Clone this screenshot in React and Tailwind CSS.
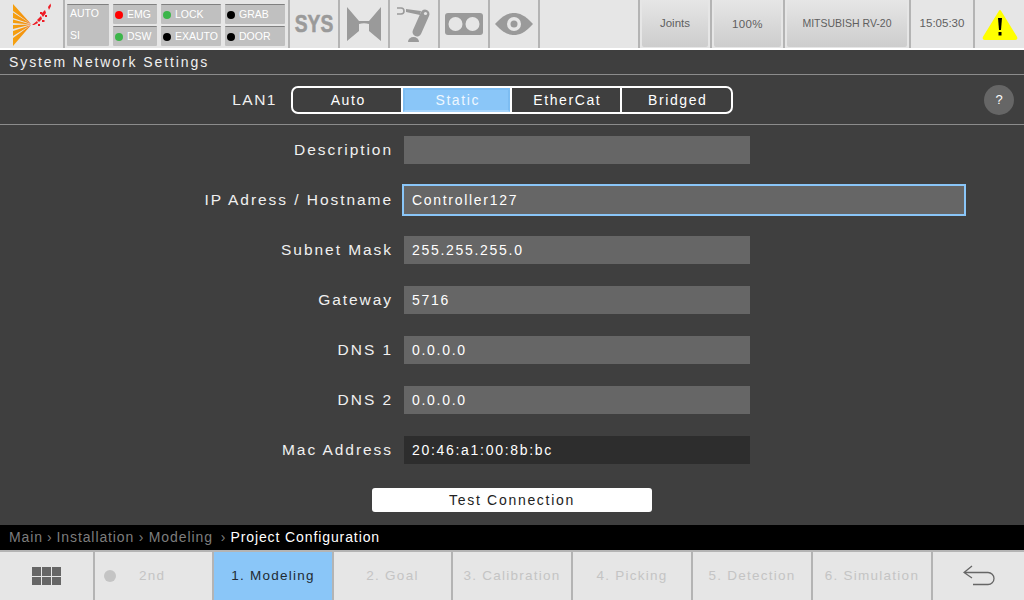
// App.jsx
// System Network Settings screen, 1024x600 panel

const labelFont = "font-['Liberation_Sans',sans-serif]";

// ── top bar status lamp ──
function Lamp({ color, label, w }) {
  return (
    <div className={`${w} h-[20px] bg-[#c0c0c0] border-t border-[#808080] rounded-[1px] flex items-center pl-[2px] text-[10.5px] text-white`}>
      <span className="w-[8px] h-[8px] rounded-full mr-[4px] shrink-0" style={{ background: color }} />
      {label}
    </div>
  );
}

function IconCell({ children }) {
  return (
    <div className="w-[50px] h-full border-r-2 border-[#b4b4b4] flex items-center justify-center shrink-0">
      {children}
    </div>
  );
}

function TopButton({ w, children }) {
  return (
    <div className={`${w} h-full shrink-0 border-r-2 border-[#b4b4b4] px-[2px] pb-[1px]`}>
      <div className="h-full rounded-b-[2px] bg-gradient-to-b from-[#e6e6e6] to-[#cdcdcd] flex items-center justify-center text-[#5f5f5f]">
        {children}
      </div>
    </div>
  );
}

function Logo() {
  return (
    <svg width="63" height="49" viewBox="0 0 63 49">
      <defs>
        <linearGradient id="fan" x1="13" y1="0" x2="31" y2="0" gradientUnits="userSpaceOnUse">
          <stop offset="0" stopColor="#f5a10f" />
          <stop offset="0.75" stopColor="#f4900f" />
          <stop offset="1" stopColor="#ef5a2a" />
        </linearGradient>
      </defs>
      <g fill="url(#fan)">
        <polygon points="13,4 13,11 31,24" />
        <polygon points="13,12.5 13,18 31,24" />
        <polygon points="13,19.5 13,23 31,24.5" />
        <polygon points="13,25 13,29 31,24.5" />
        <polygon points="13,31 13,36 31,25" />
        <polygon points="13,38 13,46 31,25" />
      </g>
      <g fill="#ee1c25">
        <polygon points="32,25 37,21 38,23 34,25" />
        <polygon points="37,20 41,16 42,19 39,22" />
        <polygon points="41,14 45,10 46,13 43,17" />
        <rect x="38" y="24" width="2" height="2" />
        <rect x="42" y="20" width="2.5" height="2" />
        <rect x="45" y="15" width="2" height="2" />
        <rect x="40" y="12" width="2" height="2" />
        <polygon points="48,7 50.5,3.5 51,6 49,10" />
      </g>
    </svg>
  );
}

function Field({ label, value, wide, dark }) {
  return (
    <div className="h-[50px] flex items-center shrink-0">
      <div className="w-[393px] text-right text-[15.5px] tracking-[1.95px] text-[#f0f0f0]">{label}</div>
      {wide ? (
        <div className="ml-[9px] w-[564px] h-[32px] bg-[#666666] border-2 border-[#8ac6f8] pl-[8px] pt-[1px] flex items-center text-[14px] tracking-[1.7px] text-white">
          {value}
        </div>
      ) : (
        <div className={`ml-[11px] w-[346px] h-[28px] ${dark ? 'bg-[#2d2d2d]' : 'bg-[#666666]'} pl-[8px] pt-[1px] flex items-center text-[14px] tracking-[1.7px] text-white`}>
          {value}
        </div>
      )}
    </div>
  );
}

function Segment({ label, active, last }) {
  return (
    <div className={`w-[110px] h-full ${last ? '' : 'border-r-2 border-white'}`}>
      <div className={`h-full pt-[1px] pl-[3px] flex items-center justify-center text-[14px] tracking-[1.6px] ${active ? 'bg-[#8ac6f8] border-2 border-[#7dbdf2] border-b-[#a4d3fa] text-[#eef7ff]' : 'text-white'}`}>
        {label}
      </div>
    </div>
  );
}

function Step({ label, active, w }) {
  return (
    <div className={`${w} h-full shrink-0 flex items-center justify-center border-r-2 border-[#b4b4b4] text-[13.5px] tracking-[1.25px] ${active ? 'bg-[#8ac6f8] text-[#222a33]' : 'text-[#c4c4c4]'}`}>
      {label}
    </div>
  );
}

export default function App() {
  return (
    <div className={`w-[1024px] h-[600px] flex flex-col overflow-hidden bg-[#3f3f3f] ${labelFont}`}>
      {/* top bar */}
      <div className="h-[50px] shrink-0 bg-[#e6e6e6] border-b-2 border-b-white flex">
        <div className="w-[65px] h-full shrink-0 border-r-2 border-[#b4b4b4] overflow-hidden">
          <Logo />
        </div>
        <div className="w-[225px] h-full shrink-0 border-r-2 border-[#b4b4b4] pl-[2px] pt-[4px] flex gap-[4px]">
          <div className="w-[42px] h-[42px] bg-[#c0c0c0] border-t border-[#808080] rounded-[1px] flex flex-col justify-between pl-[3px] pt-[1px] pb-[2px] text-[10.5px] text-white">
            <span>AUTO</span>
            <span>SI</span>
          </div>
          <div className="flex flex-col gap-[2px]">
            <Lamp w="w-[44px]" color="#ff0000" label="EMG" />
            <Lamp w="w-[44px]" color="#3cb54a" label="DSW" />
          </div>
          <div className="flex flex-col gap-[2px]">
            <Lamp w="w-[60px]" color="#3cb54a" label="LOCK" />
            <Lamp w="w-[60px]" color="#000000" label="EXAUTO" />
          </div>
          <div className="flex flex-col gap-[2px]">
            <Lamp w="w-[60px]" color="#000000" label="GRAB" />
            <Lamp w="w-[60px]" color="#000000" label="DOOR" />
          </div>
        </div>
        <IconCell>
          <span className="text-[24px] font-bold text-[#9a9a9a] scale-x-[0.8] [-webkit-text-stroke:0.6px_#9a9a9a]">SYS</span>
        </IconCell>
        <IconCell>
          <svg width="34" height="34" viewBox="0 0 34 34">
            <path d="M0 0 L12 14 H22 L34 0 V34 L22 24 V17 Q17 15.5 12 17 V24 L0 34 Z" fill="#9a9a9a" />
          </svg>
        </IconCell>
        <IconCell>
          <svg width="36" height="36" viewBox="0 0 36 36">
            <path d="M1 2 H5 a3 3 0 0 1 0 6 H1" fill="none" stroke="#9a9a9a" strokeWidth="1.6" />
            <path d="M10 3 L25 5 L24 9 L10 6 Z" fill="#9a9a9a" />
            <path d="M29 8 L21 26" fill="none" stroke="#9a9a9a" strokeWidth="9" strokeLinecap="round" />
            <circle cx="29.5" cy="7.5" r="1.6" fill="#e6e6e6" />
            <path d="M12 36 a5.5 5 0 0 1 11 0 Z" fill="#9a9a9a" />
          </svg>
        </IconCell>
        <IconCell>
          <svg width="38" height="22" viewBox="0 0 38 22">
            <rect x="0" y="0" width="38" height="22" rx="3" fill="#9a9a9a" />
            <circle cx="10.5" cy="11" r="7" fill="#e6e6e6" />
            <circle cx="27.5" cy="11" r="7" fill="#e6e6e6" />
          </svg>
        </IconCell>
        <IconCell>
          <svg width="38" height="22" viewBox="0 0 38 22">
            <path d="M0 11 C8 2 14 0 19 0 C24 0 30 2 38 11 C30 20 24 22 19 22 C14 22 8 20 0 11 Z" fill="#9a9a9a" />
            <circle cx="19" cy="11" r="7" fill="#e6e6e6" />
            <circle cx="19" cy="11" r="3.5" fill="#9a9a9a" />
          </svg>
        </IconCell>
        <div className="w-[100px] h-full shrink-0 border-r-2 border-[#b4b4b4]" />
        <TopButton w="w-[72px]"><span className="text-[11.5px]">Joints</span></TopButton>
        <TopButton w="w-[73px]"><span className="text-[11.5px] tracking-[0.4px] pt-[2px]">100%</span></TopButton>
        <TopButton w="w-[126px]"><span className="text-[10.5px] pt-[1px]">MITSUBISH RV-20</span></TopButton>
        <div className="w-[64px] h-full shrink-0 border-r-2 border-[#b4b4b4] flex items-center justify-center text-[11.5px] text-[#5f5f5f]">15:05:30</div>
        <div className="flex-1 flex items-center justify-center">
          <svg width="36" height="31" viewBox="0 0 36 31">
            <path d="M18 2 L34 28 Q35 30 33 30 H3 Q1 30 2 28 Z" fill="#ffff00" stroke="#ffff00" strokeWidth="2" strokeLinejoin="round" />
            <path d="M16 9 H20 L19 21 H17 Z" fill="#000" />
            <rect x="16.5" y="23" width="3" height="3.5" fill="#000" />
          </svg>
        </div>
      </div>

      {/* title */}
      <div className="h-[25px] shrink-0 pl-[9px] pt-[1px] flex items-center border-b border-[#8c8c8c] text-[14px] tracking-[1.9px] text-[#f0f0f0]">
        System Network Settings
      </div>

      {/* LAN selector */}
      <div className="h-[50px] shrink-0 relative flex items-center border-b border-[#8c8c8c]">
        <div className="w-[277px] text-right text-[15.5px] tracking-[1.5px] text-[#f0f0f0]">LAN1</div>
        <div className="ml-[14px] w-[442px] h-[28px] border-2 border-white rounded-[7px] overflow-hidden flex">
          <Segment label="Auto" />
          <Segment label="Static" active />
          <Segment label="EtherCat" />
          <Segment label="Bridged" last />
        </div>
        <div className="absolute left-[984px] top-[10px] w-[30px] h-[30px] rounded-full bg-[#666666] flex items-center justify-center text-[13px] text-white">?</div>
      </div>

      {/* form */}
      <div className="flex-1 flex flex-col">
        <Field label="Description" value="" />
        <Field label="IP Adress / Hostname" value="Controller127" wide />
        <Field label="Subnet Mask" value="255.255.255.0" />
        <Field label="Gateway" value="5716" />
        <Field label="DNS 1" value="0.0.0.0" />
        <Field label="DNS 2" value="0.0.0.0" />
        <Field label="Mac Address" value="20:46:a1:00:8b:bc" dark />
        <div className="mt-[13px] ml-[372px] w-[280px] h-[24px] bg-white rounded-[3px] pt-[1px] flex items-center justify-center text-[14px] tracking-[1.7px] text-[#222222]">
          Test Connection
        </div>
      </div>

      {/* breadcrumb */}
      <div className="h-[25px] shrink-0 bg-black pl-[9px] flex items-center text-[14px] tracking-[0.9px] text-[#7d7d7d]">
        <span>Main</span>
        <span className="mx-[4px]">›</span>
        <span>Installation</span>
        <span className="mx-[4.5px]">›</span>
        <span>Modeling</span>
        <span className="ml-[8px] mr-[4px]">›</span>
        <span className="text-white">Project Configuration</span>
      </div>

      {/* bottom steps */}
      <div className="h-[50px] shrink-0 bg-[#e6e6e6] border-t-2 border-[#b4b4b4] flex">
        <div className="w-[95px] h-full shrink-0 border-r-2 border-[#b4b4b4] flex items-center justify-center">
          <div className="grid grid-cols-3 gap-[1px]">
            {[0, 1, 2, 3, 4, 5].map(i => <div key={i} className="w-[9px] h-[8.5px] bg-[#666666]" />)}
          </div>
        </div>
        <div className="w-[119px] h-full shrink-0 border-r-2 border-[#b4b4b4] flex items-center pl-[9px] text-[13.5px] tracking-[1.25px] text-[#c4c4c4]">
          <span className="w-[12px] h-[12px] rounded-full bg-[#c4c4c4] mr-[23px]" />
          2nd
        </div>
        <Step w="w-[120px]" label="1. Modeling" active />
        <Step w="w-[119px]" label="2. Goal" />
        <Step w="w-[120px]" label="3. Calibration" />
        <Step w="w-[120px]" label="4. Picking" />
        <Step w="w-[120px]" label="5. Detection" />
        <Step w="w-[120px]" label="6. Simulation" />
        <div className="flex-1 flex items-center justify-center">
          <svg width="32" height="22" viewBox="0 0 32 22">
            <path d="M9 1 L1 7.5 L9 13 M1 7.5 H25 a5 5 0 0 1 0 12 H10" fill="none" stroke="#666666" strokeWidth="1.3" />
          </svg>
        </div>
      </div>
    </div>
  );
}
